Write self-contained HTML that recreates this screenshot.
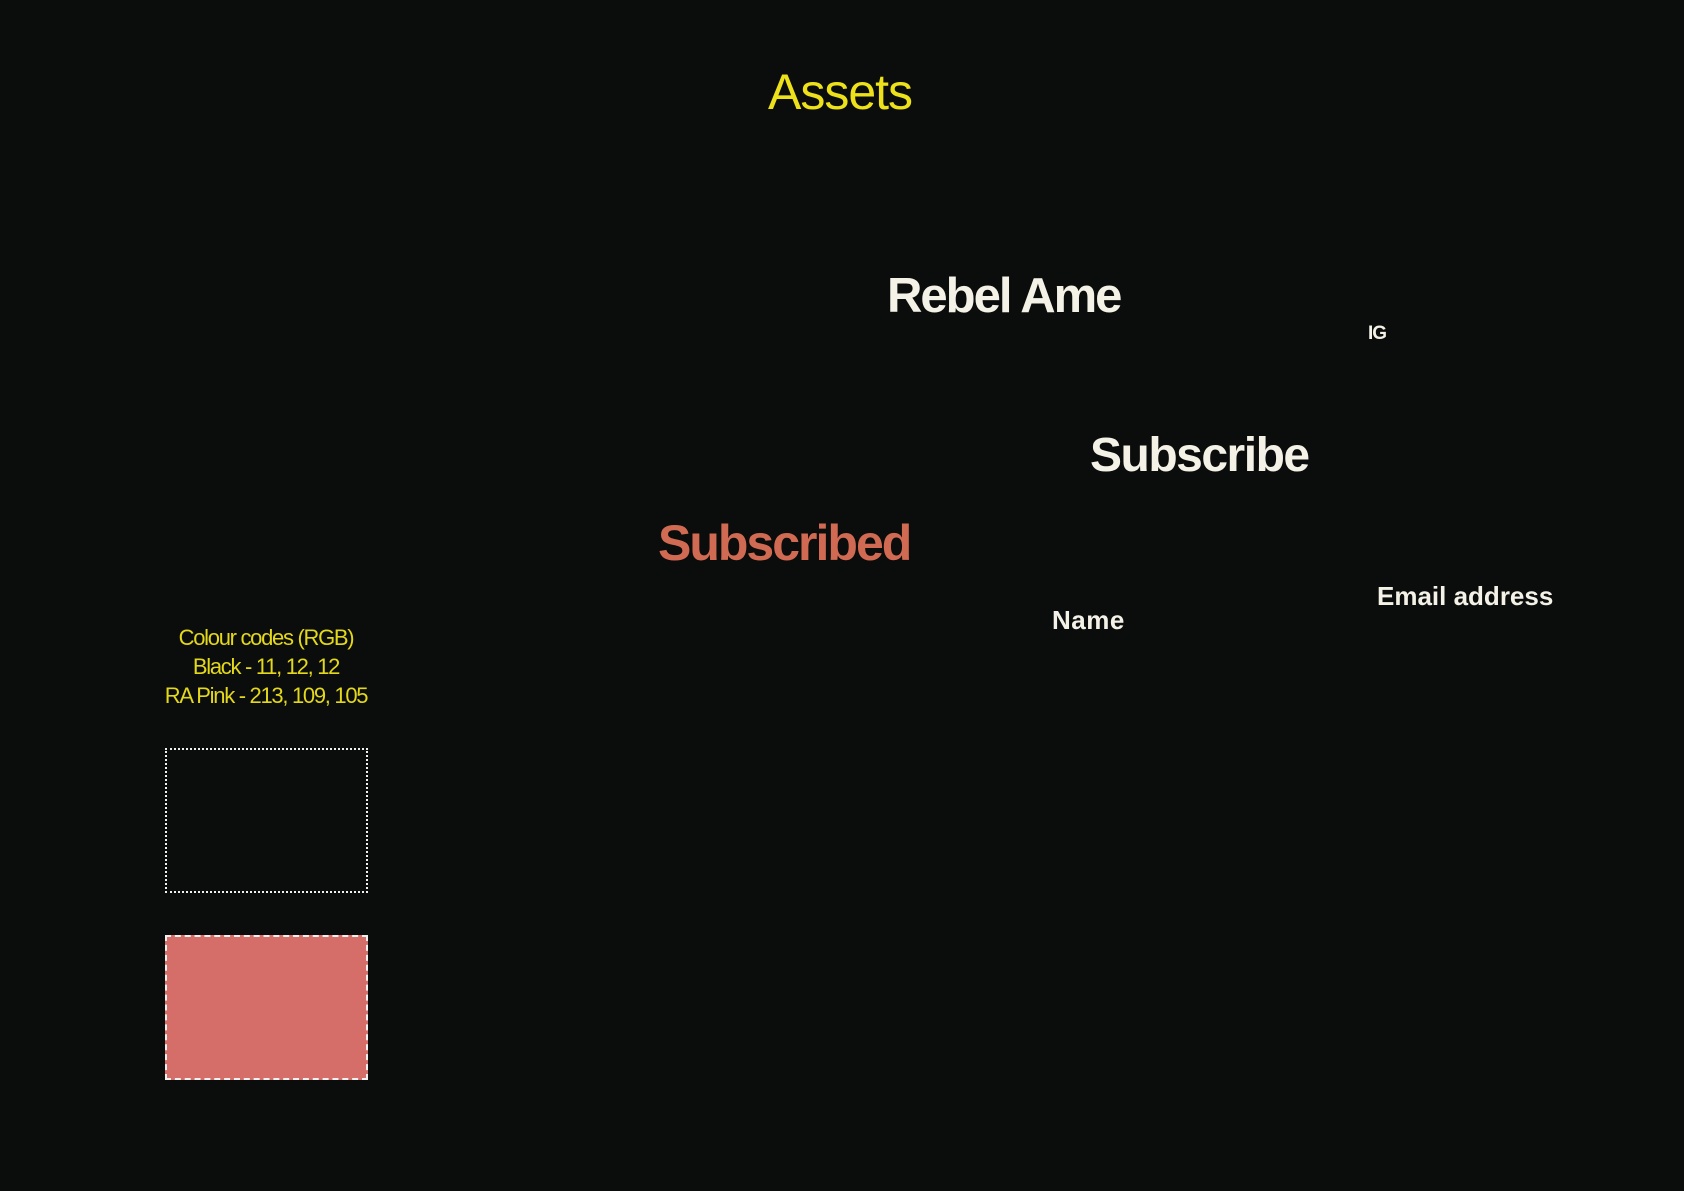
<!DOCTYPE html>
<html><head><meta charset="utf-8"><style>
html,body{margin:0;padding:0;}
body{width:1684px;height:1191px;background:#0b0c0c;position:relative;overflow:hidden;font-family:"Liberation Sans",sans-serif;}
.a{position:absolute;line-height:1;white-space:nowrap;}
.w{color:#f4f1e6;font-weight:bold;}
</style></head><body>
<div class="a" style="left:768px;top:67px;font-size:50px;color:#ede21a;letter-spacing:-1px;">Assets</div>
<div class="a w" style="left:887px;top:272px;font-size:49px;letter-spacing:-2px;">Rebel Ame</div>
<div class="a w" style="left:1368px;top:324px;font-size:19px;letter-spacing:-1px;">IG</div>
<div class="a w" style="left:1090px;top:432px;font-size:48px;letter-spacing:-1.5px;">Subscribe</div>
<div class="a" style="left:658px;top:518px;font-size:50px;font-weight:bold;color:#d06a52;letter-spacing:-2px;">Subscribed</div>
<div class="a w" style="left:1052px;top:607px;font-size:26px;letter-spacing:0.5px;">Name</div>
<div class="a w" style="left:1377px;top:583px;font-size:26px;letter-spacing:0px;">Email address</div>
<div class="a" style="left:140px;width:252px;top:623px;font-size:22px;line-height:29px;text-align:center;color:#e3d81a;letter-spacing:-1.3px;">Colour codes (RGB)<br>Black - 11, 12, 12<br>RA Pink - 213, 109, 105</div>
<div class="a" style="left:165px;top:748px;width:199px;height:141px;border:2px dotted #f0f0f0;background:#0b0d0c;"></div>
<div class="a" style="left:165px;top:935px;width:199px;height:141px;border:2px dashed #f0f0f0;background:#d56d69;"></div>
</body></html>
